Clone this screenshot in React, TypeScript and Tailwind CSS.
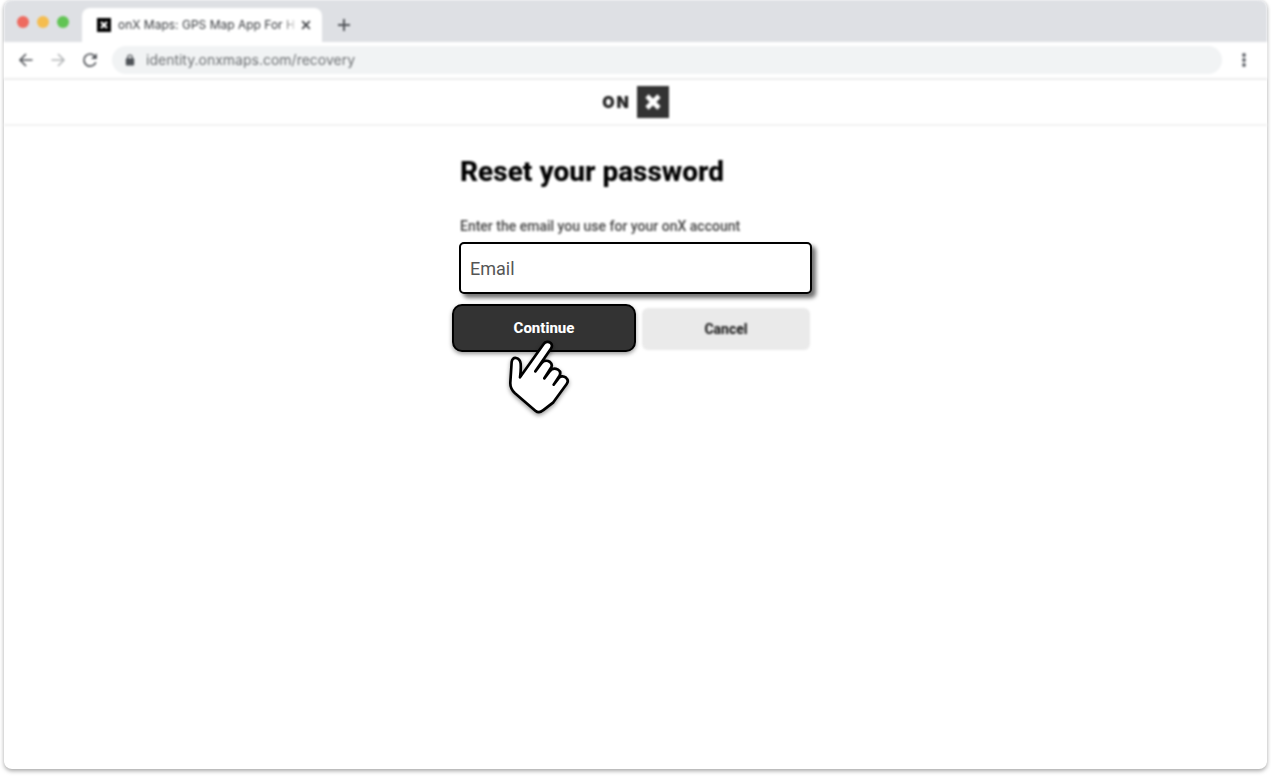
import React from "react";

const TRAFFIC_LIGHTS = [
  { id: "close", label: "Close window", color: "bg-[#ee6a5f]" },
  { id: "minimize", label: "Minimize window", color: "bg-[#f5bd4f]" },
  { id: "zoom", label: "Zoom window", color: "bg-[#61c454]" },
];

export default function App() {
  return (
    <div className="h-screen bg-white px-1 pb-2 font-[Roboto,sans-serif]">
      <div className="flex h-full flex-col rounded-lg bg-white shadow-[0_2px_4px_rgba(0,0,0,0.35)]">
        <BrowserBar />
        <SiteHeader />
        <main className="mx-auto w-[353px] pt-[26px]">
          <RecoveryForm />
        </main>
      </div>
    </div>
  );
}

function BrowserBar() {
  return (
    <div className="border-b-2 border-[#ececed] blur-[1px]">
      {/* Tab strip */}
      <div className="flex h-[42px] items-end rounded-t-lg bg-[#dee0e4]">
        <div className="flex h-10 w-[78px] items-center gap-2 pl-[13px]">
          {TRAFFIC_LIGHTS.map((light) => (
            <button
              key={light.id}
              type="button"
              aria-label={light.label}
              className={`size-3 rounded-full ${light.color}`}
            />
          ))}
        </div>
        <div className="flex h-[34px] w-[240px] items-center rounded-t-lg bg-white pr-[10px] pl-[15px]">
          <div className="flex size-[14px] shrink-0 items-center justify-center bg-black">
            <CrossMark className="size-2 text-white" />
          </div>
          <span className="ml-[7px] flex-1 font-[Inter,sans-serif] text-xs whitespace-nowrap text-[#36393d]">
            onX Maps: GPS Map App For{" "}
            <span className="bg-linear-to-r from-[#777] to-[#ddd] bg-clip-text text-transparent">H</span>
          </span>
          <button type="button" aria-label="Close tab" className="text-[#404347]">
            <svg viewBox="0 0 12 12" className="size-3" fill="none" stroke="currentColor" strokeWidth="1.7">
              <path d="M2.2 2.2l7.6 7.6M9.8 2.2l-7.6 7.6" />
            </svg>
          </button>
        </div>
        <button type="button" aria-label="New tab" className="ml-[15px] flex h-[34px] items-center text-[#505358]">
          <svg viewBox="0 0 14 14" className="size-[14px]" fill="none" stroke="currentColor" strokeWidth="1.9">
            <path d="M7 1v12M1 7h12" />
          </svg>
        </button>
      </div>

      {/* Toolbar */}
      <div className="flex h-9 items-center bg-white pr-4 pl-[14px]">
        <button type="button" aria-label="Back" className="text-[#505358]">
          <ArrowLeft />
        </button>
        <button type="button" aria-label="Forward" className="ml-4 text-[#b4b6b8]">
          <ArrowLeft className="rotate-180" />
        </button>
        <button type="button" aria-label="Reload" className="ml-4 text-[#505358]">
          <svg viewBox="0 0 16 16" className="size-4" fill="none" stroke="currentColor" strokeWidth="1.7">
            <path d="M13.8 10.2A6.1 6.1 0 1 1 12.6 4" />
            <path d="M14.8 1.2v5.8H9z" fill="currentColor" stroke="none" />
          </svg>
        </button>
        <div className="ml-[14px] flex h-7 flex-1 items-center gap-[11px] rounded-full bg-[#f1f3f4] pl-[13px]">
          <svg viewBox="0 0 10 12" className="h-3 w-[10px] shrink-0 text-[#4f5358]">
            <rect x="0.8" y="4.2" width="8.4" height="7.2" rx="1" fill="currentColor" />
            <path d="M2.8 5V3.2a2.2 2.2 0 0 1 4.4 0V5" fill="none" stroke="currentColor" strokeWidth="1.2" />
          </svg>
          <input
            type="text"
            aria-label="Address"
            defaultValue="identity.onxmaps.com/recovery"
            className="w-full bg-transparent font-[Inter,sans-serif] text-sm leading-5 text-[#6c6f72] outline-none"
          />
        </div>
        <button type="button" aria-label="Menu" className="ml-[15px] text-[#5f6368]">
          <svg viewBox="0 0 14 14" className="size-[14px]" fill="currentColor">
            <circle cx="7" cy="2" r="1.9" />
            <circle cx="7" cy="7" r="1.9" />
            <circle cx="7" cy="12" r="1.9" />
          </svg>
        </button>
      </div>
    </div>
  );
}

function SiteHeader() {
  return (
    <header className="flex h-[46px] items-center justify-center gap-2 border-b-2 border-[#f2f2f2] blur-[1px]">
      <span className="flex gap-[2px] font-[Inter,sans-serif] text-base font-black text-[#222]">
        <span>O</span>
        <span>N</span>
      </span>
      <span className="flex size-8 items-center justify-center bg-[#333]">
        <CrossMark className="size-4 text-white" />
      </span>
    </header>
  );
}

function RecoveryForm() {
  return (
    <form onSubmit={(e) => e.preventDefault()}>
      <h1 className="pl-px text-[28px] leading-10 font-extrabold text-black blur-[1px]">Reset your password</h1>
      <label htmlFor="email" className="mt-6 block pl-px text-sm leading-5 font-medium text-[#444] blur-[1px]">
        Enter the email you use for your onX account
      </label>
      <input
        id="email"
        type="email"
        placeholder="Email"
        className="mt-[6px] block h-[52px] w-full rounded-[5px] border-2 border-black bg-white px-[9px] text-lg shadow-[4px_4px_4px_rgba(0,0,0,0.55)] outline-none placeholder:text-[#555]"
      />
      <div className="relative mt-[10px] -ml-[7px] flex items-center gap-[6px]">
        <button
          type="submit"
          className="h-12 w-[184px] rounded-[10px] border-2 border-black bg-[#333] pt-px text-[15px] font-extrabold text-white shadow-[0_2px_4px_rgba(0,0,0,0.4)]"
        >
          Continue
        </button>
        <button
          type="button"
          className="mt-[2px] h-[42px] w-[168px] rounded-md bg-[#eaeaea] text-sm font-extrabold text-[#222] blur-[1px]"
        >
          Cancel
        </button>
        <HandPointer />
      </div>
    </form>
  );
}

function HandPointer() {
  return (
    <svg
      viewBox="50 24 201 240"
      className="pointer-events-none absolute top-[34px] left-[54px] h-20 w-[67px] overflow-visible drop-shadow-[0_2px_2px_rgba(0,0,0,0.4)]"
      fill="white"
      stroke="black"
      strokeWidth="8"
      strokeLinecap="round"
      strokeLinejoin="round"
    >
      <path d="M92 142L163 42C168 34 178 34 184 39C189 44 189 50 184 57L138 124L156 100C163 91 174 91 182 96C189 102 189 108 184 115L165 145L181 124C187 116 197 114 206 119C214 124 214 131 210 138L193 164L207 146C212 138 222 137 230 143C237 149 237 155 232 162L192 217L161 241C153 248 145 248 138 242L77 190C66 180 62 171 63 157L67 96C68 87 73 83 80 84C89 86 93 92 94 101C95 115 94 128 92 142Z" />
    </svg>
  );
}

function ArrowLeft({ className = "" }: { className?: string }) {
  return (
    <svg viewBox="0 0 16 16" className={`size-4 ${className}`} fill="none" stroke="currentColor" strokeWidth="1.6">
      <path d="M14.5 8H2.5M8 2L2 8l6 6" />
    </svg>
  );
}

function CrossMark({ className }: { className: string }) {
  return (
    <svg viewBox="0 0 16 16" className={className} fill="none" stroke="currentColor" strokeWidth="4.6">
      <path d="M2 2l12 12M14 2L2 14" />
    </svg>
  );
}
